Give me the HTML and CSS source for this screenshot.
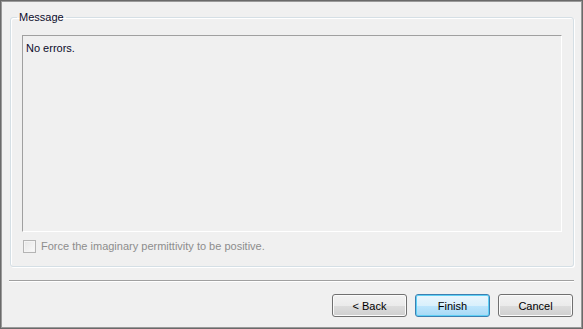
FILE: index.html
```html
<!DOCTYPE html>
<html>
<head>
<meta charset="utf-8">
<link rel="stylesheet" href="styles.css">
</head>
<body>
<div class="window">
  <fieldset class="group">
    <legend class="group-title">Message</legend>
    <div class="message-box">No errors.</div>
    <div class="check-row">
      <span class="checkbox"></span>
      <span class="check-label">Force the imaginary permittivity to be positive.</span>
    </div>
  </fieldset>
  <div class="separator"></div>
  <div class="buttons">
    <button class="btn">&lt; Back</button>
    <button class="btn btn-default">Finish</button>
    <button class="btn">Cancel</button>
  </div>
</div>
</body>
</html>
```
FILE: styles.css
```css
html, body {
  margin: 0;
  padding: 0;
  background: #f0f0f0;
}
.window {
  width: 583px;
  height: 329px;
  box-sizing: border-box;
  border: 1px solid #6a6a6a;
  box-shadow: inset 0 0 0 1px #9a9a9a;
  background: #f0f0f0;
  padding: 10px 8px 0 9px;
  font-family: "Liberation Sans", Arial, sans-serif;
  font-size: 11px;
  line-height: 13px;
  color: #000;
  display: flex;
  flex-direction: column;
}
.group {
  margin: 0;
  padding: 11px 11px 13px 11px;
  border: 1px solid #d5dfe5;
  border-radius: 3px;
  box-shadow: inset 1px 1px 0 #fff, 1px 1px 0 #fff;
  min-width: 0;
}
.group-title {
  padding: 0 2px;
  margin-left: -5px;
  color: #0c0c2c;
  line-height: 13px;
}
.message-box {
  height: 197px;
  box-sizing: border-box;
  border: 1px solid;
  border-color: #a0a0a0 #ffffff #ffffff #a0a0a0;
  padding: 6px 3px;
  color: #0c0c2c;
}
.check-row {
  display: flex;
  align-items: center;
  gap: 5px;
  margin-top: 8px;
  margin-left: 1px;
  height: 13px;
}
.checkbox {
  width: 13px;
  height: 13px;
  box-sizing: border-box;
  border: 1px solid #b4b4b4;
  background: linear-gradient(135deg, #e6e6e6 0%, #fafafa 100%);
  box-shadow: inset 0 0 0 1px #f4f4f4;
  flex: none;
}
.check-label {
  color: #8d8d8d;
}
.separator {
  margin: 13px 0 0 -1px;
  height: 1px;
  background: #a0a0a0;
  border-bottom: 1px solid #ffffff;
}
.buttons {
  display: flex;
  justify-content: flex-end;
  gap: 8px;
  margin-top: 12px;
  margin-right: 1px;
}
.btn {
  width: 75px;
  height: 23px;
  box-sizing: border-box;
  margin: 0;
  padding: 0;
  font-family: "Liberation Sans", Arial, sans-serif;
  font-size: 11px;
  color: #000;
  border: 1px solid #707070;
  border-radius: 3px;
  background: linear-gradient(#f2f2f2 0%, #ebebeb 50%, #dddddd 50%, #cfcfcf 100%);
  box-shadow: inset 0 0 0 1px #fbfbfb;
}
.btn-default {
  border-color: #3c7fb1;
  background: linear-gradient(#eaf6fd 0%, #d9f0fc 50%, #bee6fd 50%, #a7d9f5 100%);
  box-shadow: inset 0 0 0 1px #5fd0f5;
}
```
